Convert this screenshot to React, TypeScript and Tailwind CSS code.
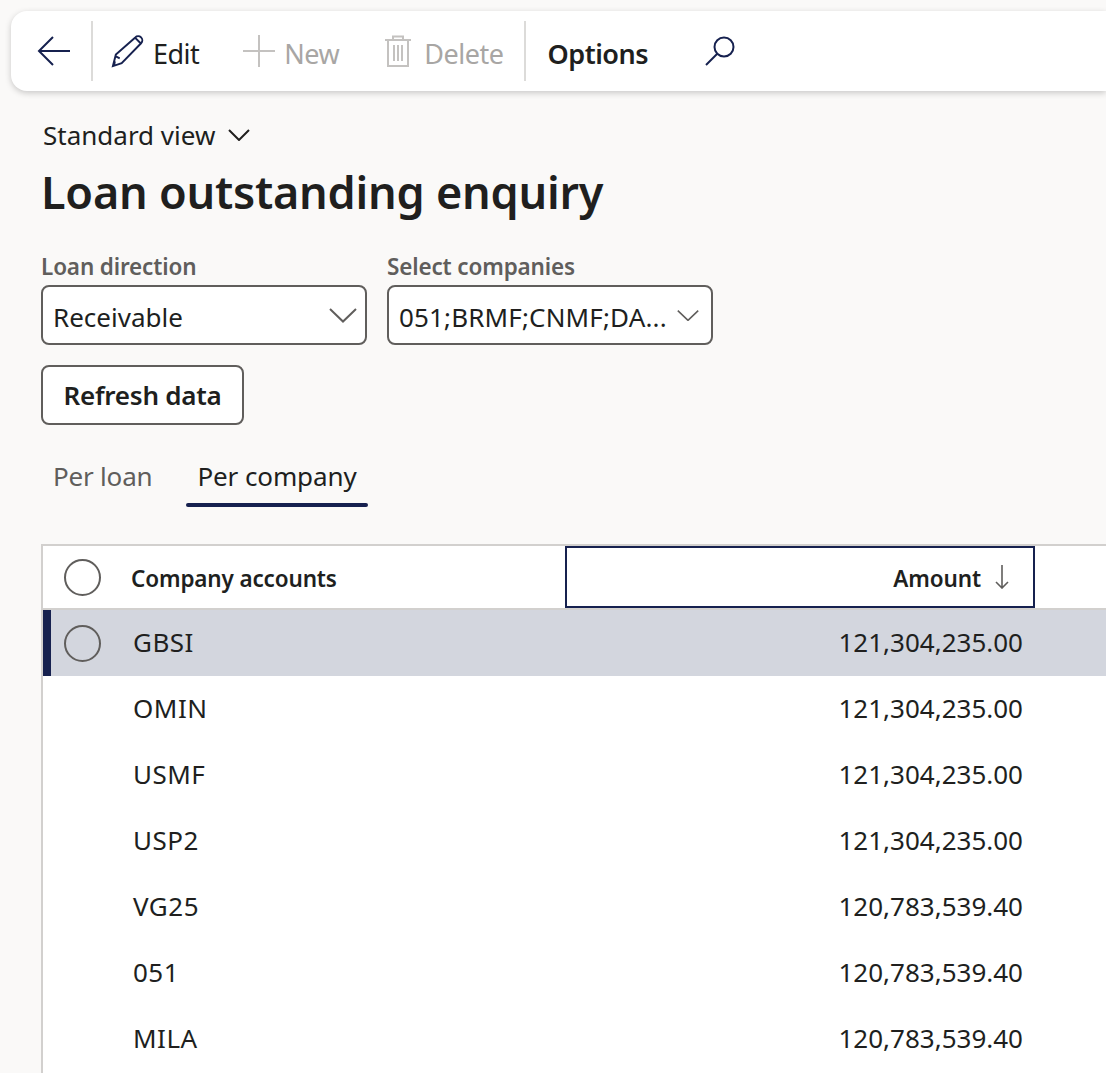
const rows = [
  ["GBSI", "121,304,235.00"],
  ["OMIN", "121,304,235.00"],
  ["USMF", "121,304,235.00"],
  ["USP2", "121,304,235.00"],
  ["VG25", "120,783,539.40"],
  ["051", "120,783,539.40"],
  ["MILA", "120,783,539.40"],
];

function Chevron({ w }: { w: number }) {
  return (
    <svg width={w} height={(w * 16) / 28} viewBox="0 0 28 16" fill="none" stroke="#605e5c" strokeWidth="2">
      <path d="M1 2 L14 14.5 L27 2" />
    </svg>
  );
}

export default function App() {
  return (
    <div className="w-[1106px] h-[1073px] overflow-hidden bg-[#faf9f8] text-[#201f1e] font-['Noto_Sans','Open_Sans',sans-serif]">
      <div className="pt-[11px] pl-[11px]">
        <div className="h-[80px] bg-white rounded-l-[16px] shadow-[0_2px_6px_rgba(0,0,0,0.2)] flex items-center">
          <div className="w-[80px] flex justify-center pl-[5px]">
            <svg width="34" height="30" viewBox="0 0 34 30" fill="none" stroke="#16214f" strokeWidth="2">
              <path d="M33 15 H2 M16 1 L2 15 L16 29" />
            </svg>
          </div>
          <div className="w-[2px] h-[60px] bg-[#dcdbd9]" />
          <div className="w-[18px]" />
          <svg width="33" height="33" viewBox="0 0 34 34" fill="none" stroke="#16214f" strokeWidth="2">
            <path d="M2 32 L5 20 L25 2.5 A4 4 0 0 1 31 8.5 L11 29 Z M5 22 L9 24 M3 32 L4 27 M25 3 L31 9" />
          </svg>
          <span className="ml-[9px] pt-[4px] text-[27px] leading-none tracking-[-0.5px]">Edit</span>
          <svg width="32" height="32" viewBox="0 0 32 32" fill="none" stroke="#c4c2c0" strokeWidth="2" className="ml-[44px]">
            <path d="M0 16 H32 M16 0 V32" />
          </svg>
          <span className="ml-[9px] pt-[4px] text-[27px] leading-none tracking-[-0.5px] text-[#a8a6a4]">New</span>
          <svg width="26" height="32" viewBox="0 0 26 32" fill="none" stroke="#c4c2c0" strokeWidth="2" className="ml-[46px]">
            <path d="M0 5 H26 M8 5 V1.5 H18 V5 M3 5 V31 H23 V5 M9 10 V26 M13 10 V26 M17 10 V26" />
          </svg>
          <span className="ml-[13px] pt-[4px] text-[27px] leading-none tracking-[-0.5px] text-[#a8a6a4]">Delete</span>
          <div className="ml-[21px] w-[2px] h-[60px] bg-[#dcdbd9]" />
          <span className="ml-[21px] pt-[4px] text-[27px] leading-none font-semibold tracking-[-0.45px]">Options</span>
          <svg width="30" height="30" viewBox="0 0 30 30" fill="none" stroke="#16214f" strokeWidth="2" className="ml-[57px]">
            <circle cx="19" cy="11" r="9.5" />
            <path d="M12 18 L1 29" />
          </svg>
        </div>
      </div>

      <div className="pl-[41px]">
        <div className="mt-[26px] h-[36px] flex items-center gap-[13px] text-[26px] pl-[2px]">
          Standard view
          <svg width="22" height="12" viewBox="0 0 22 12" fill="none" stroke="#201f1e" strokeWidth="2">
            <path d="M1 1 L11 11 L21 1" />
          </svg>
        </div>
        <h1 className="mt-[8px] h-[60px] flex items-center text-[45px] leading-none font-semibold tracking-[-0.23px]">Loan outstanding enquiry</h1>

        <div className="mt-[31px] flex gap-[20px]">
          <div className="w-[326px]">
            <div className="h-[33px] pb-[4px] flex items-center text-[22.5px] font-semibold text-[#605e5c] tracking-[-0.15px]">Loan direction</div>
            <div className="h-[60px] bg-white border-2 border-[#605e5c] rounded-[8px] flex items-center justify-between pl-[10px] pr-[8px]">
              <span className="pt-[4px] text-[26px]">Receivable</span>
              <Chevron w={28} />
            </div>
          </div>
          <div className="w-[326px]">
            <div className="h-[33px] pb-[4px] flex items-center text-[22.5px] font-semibold text-[#605e5c] tracking-[-0.15px]">Select companies</div>
            <div className="h-[60px] bg-white border-2 border-[#605e5c] rounded-[8px] flex items-center justify-between pl-[10px] pr-[12px]">
              <span className="pt-[4px] text-[26px] tracking-[0.15px] whitespace-nowrap">051;BRMF;CNMF;DA...</span>
              <Chevron w={22} />
            </div>
          </div>
        </div>

        <div className="mt-[20px] w-[203px] h-[60px] bg-white border-2 border-[#605e5c] rounded-[8px] flex items-center justify-center text-[26px] font-semibold tracking-[-0.25px]">
          Refresh data
        </div>

        <div className="mt-[26px] flex pl-[12px] text-[26px]">
          <div className="h-[56px] flex items-center pb-[5px] text-[#605e5c] tracking-[-0.2px]">Per loan</div>
          <div className="relative ml-[45px] h-[56px] flex items-center pb-[5px] tracking-[-0.1px]">
            Per company
            <div className="absolute -left-[11px] -right-[11px] bottom-0 h-[4px] rounded-full bg-[#16214f]" />
          </div>
        </div>

        <div className="mt-[37px] border-l-2 border-t-2 border-[#d2d0ce] bg-white">
          <div className="h-[64px] flex items-stretch border-b-2 border-[#d2d0ce]">
            <div className="w-[88px] flex items-center pl-[21px]">
              <div className="w-[37px] h-[37px] rounded-full border-2 border-[#605e5c]" />
            </div>
            <div className="w-[434px] flex items-center pt-[4px] text-[22.5px] font-semibold tracking-[-0.15px]">Company accounts</div>
            <div className="w-[470px] h-[62px] border-2 border-[#16214f] flex items-center justify-end pr-[24px] gap-[14px] text-[22.5px] font-semibold tracking-[-0.1px]">
              <span className="pt-[4px]">Amount</span>
              <svg width="14" height="24" viewBox="0 0 14 24" fill="none" stroke="#605e5c" strokeWidth="1.6">
                <path d="M7 0 V23 M1 17 L7 23 L13 17" />
              </svg>
            </div>
          </div>
          {rows.map(([c, a], i) => (
            <div key={c} className={i === 0 ? "h-[66px] flex items-center bg-[#d3d6de]" : "h-[66px] flex items-center"}>
              <div className={i === 0 ? "w-[8px] self-stretch bg-[#16214f]" : "w-[8px] self-stretch"} />
              <div className="w-[82px] flex items-center pl-[13px]">
                {i === 0 && <div className="w-[37px] h-[37px] rounded-full border-2 border-[#605e5c]" />}
              </div>
              <div className="w-[400px] pb-[2px] text-[26px] tracking-[0.5px]">{c}</div>
              <div className="w-[490px] pb-[2px] text-right text-[26px]">{a}</div>
            </div>
          ))}
          <div className="h-[66px]" />
        </div>
      </div>
    </div>
  );
}
